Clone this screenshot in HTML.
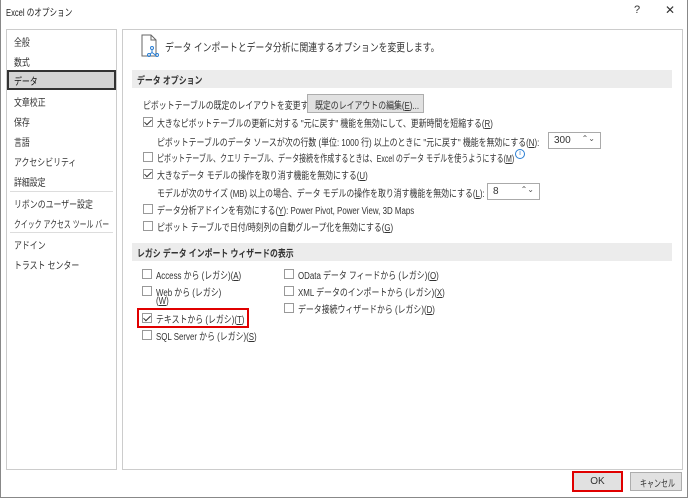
<!DOCTYPE html>
<html><head><meta charset="utf-8"><style>
*{margin:0;padding:0;box-sizing:border-box}
body{width:688px;height:498px;background:#fff;position:relative;overflow:hidden;font-family:"Liberation Sans","Noto Sans CJK JP",sans-serif;font-size:10px;color:#333}
.a{position:absolute;white-space:nowrap}
.t{transform:scaleX(0.79);transform-origin:0 0}
.i{display:inline-block;transform:scaleX(0.79);transform-origin:0 0}
.cb{position:absolute;width:10px;height:10px;border:1px solid #999;background:#fff}
.cb.c::after{content:"";position:absolute;left:2px;top:0px;width:3px;height:6px;border:solid #333;border-width:0 1.3px 1.3px 0;transform:rotate(45deg)}
.band{position:absolute;left:132px;width:540px;height:18px;background:#ececec;font-weight:bold;padding:2px 0 0 5px;color:#333}
.spin{position:absolute;height:17px;border:1px solid #aaa;background:#fff;padding:2px 0 0 5px}
.spin span{position:absolute;right:5px;top:1px;font-size:8px;color:#555}
u{text-decoration:underline}
</style></head><body>
<div style="position:absolute;left:0;top:0;width:688px;height:498px;border:1px solid #888;border-top:none"></div>
<div class="a t" style="left:6px;top:4px;font-size:10px;color:#222;transform:scaleX(0.76)">Excel のオプション</div>
<div class="a" style="left:634px;top:4px;font-size:11px">?</div>
<div class="a" style="left:665px;top:3px;font-size:12px">✕</div>

<div style="position:absolute;left:6px;top:29px;width:111px;height:441px;border:1px solid #ccc"></div>
<div style="position:absolute;left:7px;top:70px;width:109px;height:20px;background:#d4d4d4;border:2px solid #333"></div>
<div class="a t" style="left:14px;top:34px">全般</div>
<div class="a t" style="left:14px;top:54px">数式</div>
<div class="a t" style="left:14px;top:73px;color:#111">データ</div>
<div class="a t" style="left:14px;top:94px">文章校正</div>
<div class="a t" style="left:14px;top:114px">保存</div>
<div class="a t" style="left:14px;top:134px">言語</div>
<div class="a t" style="left:14px;top:154px">アクセシビリティ</div>
<div class="a t" style="left:14px;top:174px">詳細設定</div>
<div style="position:absolute;left:10px;top:191px;width:103px;height:1px;background:#ddd"></div>
<div class="a t" style="left:14px;top:196px">リボンのユーザー設定</div>
<div class="a t" style="left:14px;top:216px;transform:scaleX(0.69)">クイック アクセス ツール バー</div>
<div style="position:absolute;left:10px;top:232px;width:103px;height:1px;background:#ddd"></div>
<div class="a t" style="left:14px;top:237px">アドイン</div>
<div class="a t" style="left:14px;top:257px">トラスト センター</div>

<div style="position:absolute;left:122px;top:29px;width:561px;height:441px;border:1px solid #ccc"></div>
<svg class="a" style="left:141px;top:34px" width="20" height="24" viewBox="0 0 20 24"><path d="M1 1h9l5 5v16H1z M10 1v5h5" fill="none" stroke="#666" stroke-width="1"/><g fill="none" stroke="#2a7ed3" stroke-width="1"><circle cx="11" cy="14" r="1.5"/><circle cx="8" cy="21" r="1.5"/><circle cx="16" cy="21" r="1.5"/><path d="M11 15.5v3l-2 1.5M11 18.5l3.5 2.5"/></g></svg>
<div class="a t" style="left:165px;top:39px;font-size:11px;transform:scaleX(0.8)">データ インポートとデータ分析に関連するオプションを変更します。</div>

<div class="band" style="top:70px"><span class="i">データ オプション</span></div>
<div class="a t" style="left:143px;top:97px">ピボットテーブルの既定のレイアウトを変更する:</div>
<div class="a" style="left:307px;top:94px;width:117px;height:19px;background:#e1e1e1;border:1px solid #adadad;padding:2px 0 0 7px"><span class="i">既定のレイアウトの編集(<u>E</u>)...</span></div>
<div class="cb c" style="left:143px;top:117px"></div>
<div class="a t" style="left:157px;top:115px">大きなピボットテーブルの更新に対する "元に戻す" 機能を無効にして、更新時間を短縮する(<u>R</u>)</div>
<div class="a t" style="left:157px;top:134px">ピボットテーブルのデータ ソースが次の行数 (単位: 1000 行) 以上のときに "元に戻す" 機能を無効にする(<u>N</u>):</div>
<div class="spin" style="left:548px;top:132px;width:53px">300<span>⌃⌄</span></div>
<div class="cb" style="left:143px;top:152px"></div>
<div class="a t" style="left:157px;top:150px;transform:scaleX(0.705)">ピボットテーブル、クエリ テーブル、データ接続を作成するときは、Excel のデータ モデルを使うようにする(<u>M</u>)</div>
<div class="a" style="left:515px;top:149px;width:10px;height:10px;border:1px solid #2a7ed3;border-radius:50%;font-size:7px;color:#2a7ed3;text-align:center;line-height:8px;background:#fff">i</div>
<div class="cb c" style="left:143px;top:169px"></div>
<div class="a t" style="left:157px;top:167px">大きなデータ モデルの操作を取り消す機能を無効にする(<u>U</u>)</div>
<div class="a t" style="left:157px;top:185px">モデルが次のサイズ (MB) 以上の場合、データ モデルの操作を取り消す機能を無効にする(<u>L</u>):</div>
<div class="spin" style="left:487px;top:183px;width:53px">8<span>⌃⌄</span></div>
<div class="cb" style="left:143px;top:204px"></div>
<div class="a t" style="left:157px;top:202px">データ分析アドインを有効にする(<u>Y</u>): Power Pivot, Power View, 3D Maps</div>
<div class="cb" style="left:143px;top:221px"></div>
<div class="a t" style="left:157px;top:219px">ピボット テーブルで日付/時刻列の自動グループ化を無効にする(<u>G</u>)</div>

<div class="band" style="top:243px"><span class="i">レガシ データ インポート ウィザードの表示</span></div>
<div class="cb" style="left:142px;top:269px"></div>
<div class="a t" style="left:156px;top:267px">Access から (レガシ)(<u>A</u>)</div>
<div class="cb" style="left:142px;top:286px"></div>
<div class="a t" style="left:156px;top:284px">Web から (レガシ)</div>
<div class="a t" style="left:156px;top:296px">(<u>W</u>)</div>
<div class="cb c" style="left:142px;top:313px"></div>
<div class="a t" style="left:156px;top:311px">テキストから (レガシ)(<u>T</u>)</div>
<div style="position:absolute;left:137px;top:308px;width:112px;height:20px;border:2px solid #e00000"></div>
<div class="cb" style="left:142px;top:330px"></div>
<div class="a t" style="left:156px;top:328px">SQL Server から (レガシ)(<u>S</u>)</div>
<div class="cb" style="left:284px;top:269px"></div>
<div class="a t" style="left:298px;top:267px">OData データ フィードから (レガシ)(<u>O</u>)</div>
<div class="cb" style="left:284px;top:286px"></div>
<div class="a t" style="left:298px;top:284px">XML データのインポートから (レガシ)(<u>X</u>)</div>
<div class="cb" style="left:284px;top:303px"></div>
<div class="a t" style="left:298px;top:301px">データ接続ウィザードから (レガシ)(<u>D</u>)</div>

<div class="a" style="left:572px;top:471px;width:51px;height:21px;background:#e1e1e1;border:2px solid #e00000;text-align:center;padding-top:3px">OK</div>
<div class="a" style="left:630px;top:472px;width:52px;height:19px;background:#e1e1e1;border:1px solid #adadad"></div>
<div class="a t" style="left:640px;top:475px;transform:scaleX(0.7)">キャンセル</div>
</body></html>
